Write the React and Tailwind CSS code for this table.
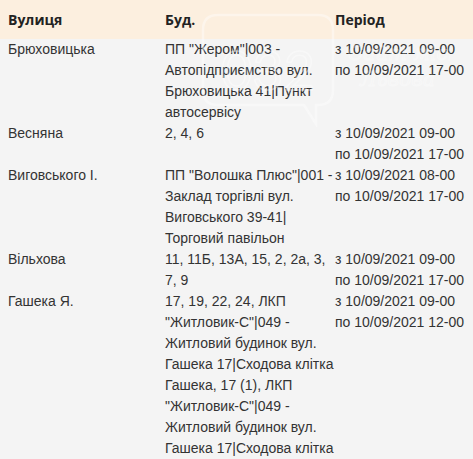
import React from "react";

const rows = [
  {
    street: "Брюховицька",
    bud: ["ПП \"Жером\"|003 -", "Автопідприємство вул.", "Брюховицька 41|Пункт", "автосервісу"],
    from: "з 10/09/2021 09-00",
    to: "по 10/09/2021 17-00",
  },
  { street: "Весняна", bud: ["2, 4, 6"], from: "з 10/09/2021 09-00", to: "по 10/09/2021 17-00" },
  {
    street: "Виговського І.",
    bud: ["ПП \"Волошка Плюс\"|001 -", "Заклад торгівлі вул.", "Виговського 39-41|", "Торговий павільон"],
    from: "з 10/09/2021 08-00",
    to: "по 10/09/2021 17-00",
  },
  {
    street: "Вільхова",
    bud: ["11, 11Б, 13А, 15, 2, 2а, 3,", "7, 9"],
    from: "з 10/09/2021 09-00",
    to: "по 10/09/2021 17-00",
  },
  {
    street: "Гашека Я.",
    bud: [
      "17, 19, 22, 24, ЛКП",
      "\"Житловик-С\"|049 -",
      "Житловий будинок вул.",
      "Гашека 17|Сходова клітка",
      "Гашека, 17 (1), ЛКП",
      "\"Житловик-С\"|049 -",
      "Житловий будинок вул.",
      "Гашека 17|Сходова клітка",
    ],
    from: "з 10/09/2021 09-00",
    to: "по 10/09/2021 12-00",
  },
];

export default function App() {
  return (
    <div
      className="relative w-[473px] h-[459px] overflow-hidden bg-[#f4f4f4] text-[14px] leading-[21px] text-[#333]"
      style={{ fontFamily: '"Liberation Sans", Arial, sans-serif' }}
    >
      <div
        className="grid grid-cols-[157px_170px_1fr] pl-2 bg-[#fcefdf] pt-[9px] pb-[9px] font-bold text-[#222]"
        style={{ fontFamily: '"Open Sans", "Liberation Sans", sans-serif' }}
      >
        <div>Вулиця</div>
        <div>Буд.</div>
        <div>Період</div>
      </div>
      <div className="flex flex-col">
        {rows.map((r, i) => (
          <div key={i} className="grid grid-cols-[157px_170px_1fr] pl-2">
            <div>{r.street}</div>
            <div className="whitespace-nowrap">
              {r.bud.map((l, j) => (
                <div key={j}>{l}</div>
              ))}
            </div>
            <div className="whitespace-nowrap">
              <div>{r.from}</div>
              <div>{r.to}</div>
            </div>
          </div>
        ))}
      </div>
      <svg
        className="absolute left-[200px] top-[12px] pointer-events-none"
        width="250"
        height="115"
        viewBox="0 0 250 115"
        fill="none"
      >
        <path
          d="M18 3 H118 Q133 3 133 18 V78 Q133 93 118 93 L116 93 L116 112 L104 93 H18 Q3 93 3 78 V18 Q3 3 18 3 Z"
          stroke="white"
          strokeOpacity="0.4"
          strokeWidth="2.5"
        />
        <text
          x="68"
          y="78"
          textAnchor="middle"
          fontSize="54"
          fontFamily="Lato, sans-serif"
          fill="none"
          stroke="white"
          strokeOpacity="0.4"
          strokeWidth="1.5"
        >
          032
        </text>
        <text
          x="148"
          y="48"
          fontSize="20"
          fontStyle="italic"
          fontFamily="DejaVu Serif, serif"
          fill="none"
          stroke="white"
          strokeOpacity="0.35"
          strokeWidth="1"
        >
          Сайт міста
        </text>
        <text
          x="160"
          y="74"
          fontSize="20"
          fontStyle="italic"
          fontFamily="DejaVu Serif, serif"
          fill="none"
          stroke="white"
          strokeOpacity="0.35"
          strokeWidth="1"
        >
          Львова
        </text>
      </svg>
    </div>
  );
}
